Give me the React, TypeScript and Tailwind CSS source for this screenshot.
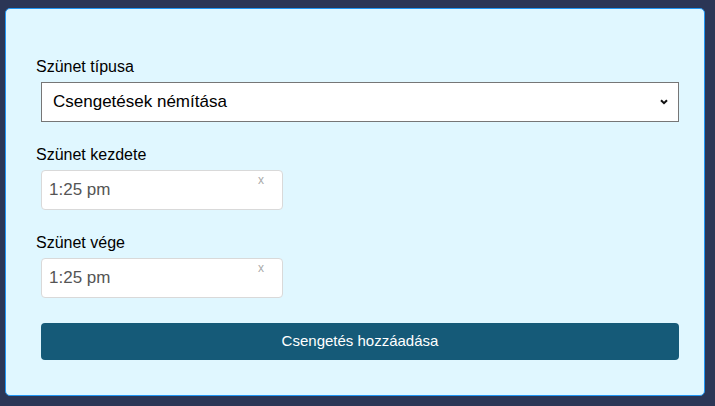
import React from "react";

const font = { fontFamily: '"Liberation Sans", Arial, sans-serif' };

function TimeField() {
  return (
    <div className="relative ml-[5px] mt-[6px] h-[40px] w-[242px] rounded-[4px] border border-[#d9d9d9] bg-white">
      <span className="absolute left-[7px] top-[9px] text-[17px] leading-[20px] text-[#555]">1:25 pm</span>
      <span className="absolute right-[18px] top-[2px] text-[12px] leading-[14px] text-[#aaa]">x</span>
    </div>
  );
}

export default function App() {
  return (
    <div className="min-h-[406px] w-full bg-[#2b3656] pb-[10px] pl-[5px] pr-[10px] pt-[8px]" style={font}>
      <div className="h-[388px] rounded-[5px] border border-[#2196f3] bg-[#e0f7ff] pl-[30px] pr-[25px] pt-[49px]">
        <label className="block text-[16px] leading-[18px] text-black">Szünet típusa</label>
        <div className="relative ml-[5px] mt-[6px] flex h-[40px] items-center border border-[#767676] bg-white pl-[11px]">
          <span className="text-[17px] leading-[20px] text-black">Csengetések némítása</span>
          <svg className="absolute right-[10px] top-[16px]" width="8" height="6" viewBox="0 0 8 6">
            <path d="M1 1.2 L4 4.2 L7 1.2" fill="none" stroke="#111" strokeWidth="2" />
          </svg>
        </div>

        <label className="mt-[24px] block text-[16px] leading-[18px] text-black">Szünet kezdete</label>
        <TimeField />

        <label className="mt-[24px] block text-[16px] leading-[18px] text-black">Szünet vége</label>
        <TimeField />

        <button className="ml-[5px] mt-[25px] flex h-[37px] w-[calc(100%-5px)] items-center justify-center rounded-[4px] bg-[#155a78] text-[15px] text-white">
          Csengetés hozzáadása
        </button>
      </div>
    </div>
  );
}
